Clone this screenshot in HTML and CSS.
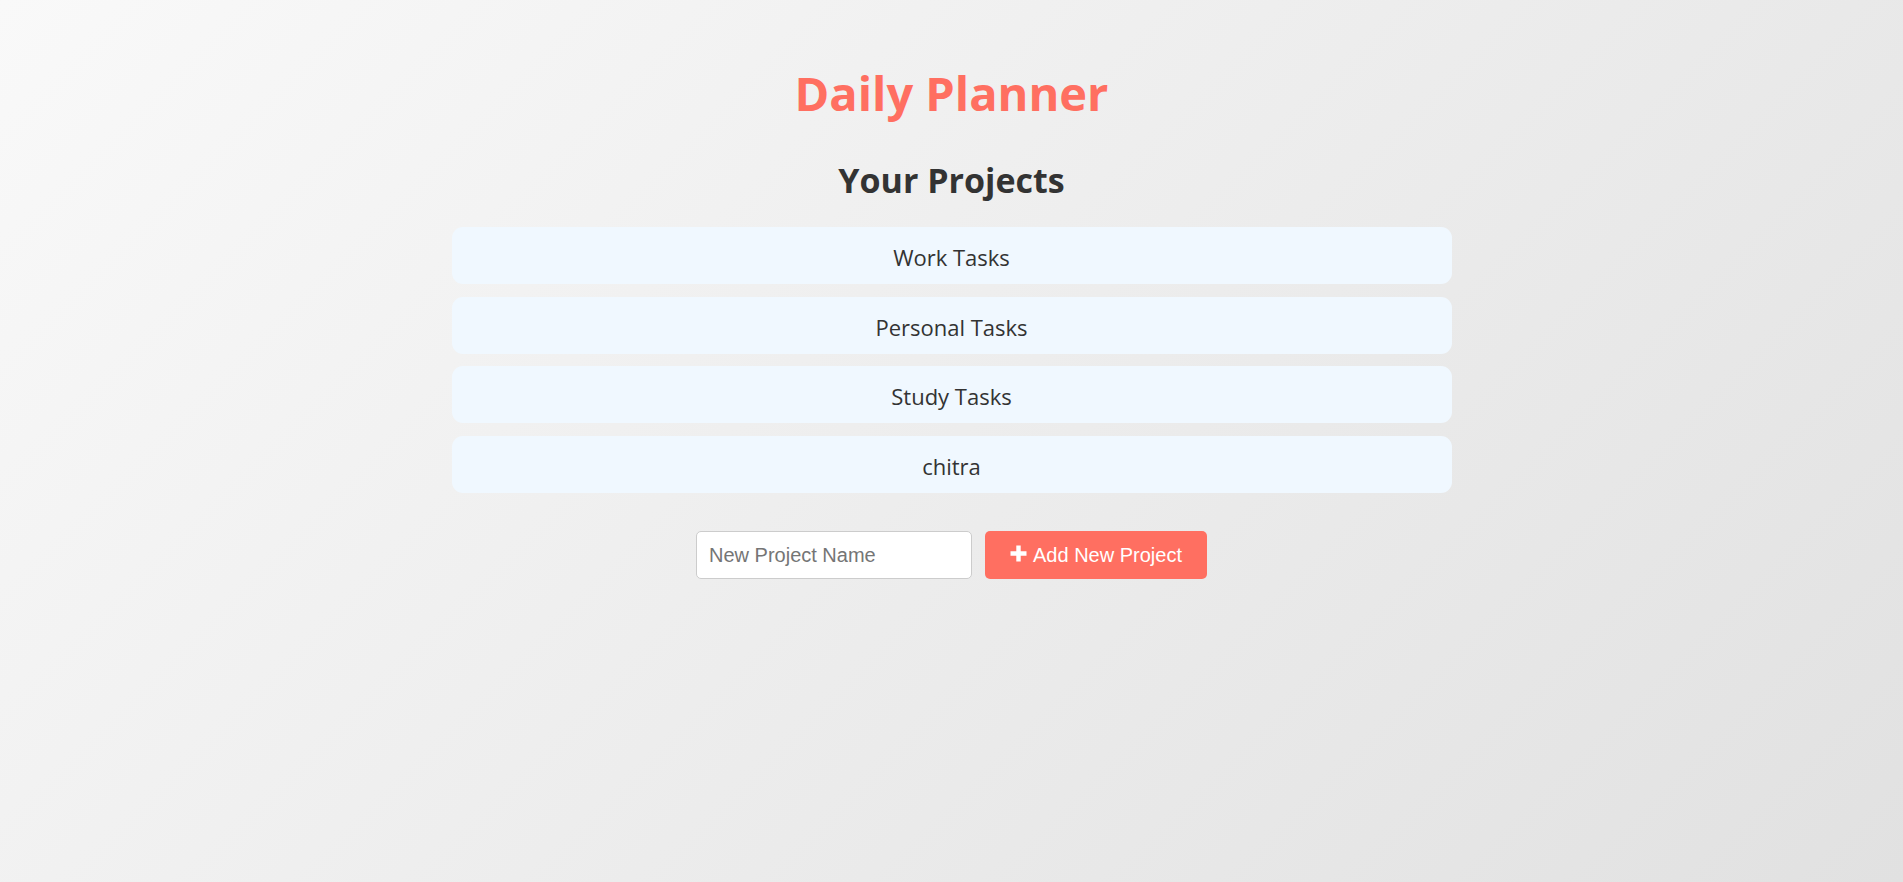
FILE: index.html
```html
<!DOCTYPE html>
<html lang="en">
<head>
<meta charset="utf-8">
<title>Daily Planner</title>
<link rel="stylesheet" href="styles.css">
</head>
<body>
<main class="planner">
  <h1 class="title">Daily Planner</h1>
  <h2 class="subtitle">Your Projects</h2>
  <ul class="projects">
    <li class="project">Work Tasks</li>
    <li class="project">Personal Tasks</li>
    <li class="project">Study Tasks</li>
    <li class="project">chitra</li>
  </ul>
  <form class="add-form">
    <input class="add-input" type="text" placeholder="New Project Name">
    <button class="add-button" type="button">
      <svg class="plus" viewBox="0 0 17 17" width="17" height="17" aria-hidden="true"><path d="M6.3 0.5h4.4v5.8h5.8v4.4h-5.8v5.8H6.3v-5.8H0.5V6.3h5.8z" fill="#fff"/></svg>
      <span>Add New Project</span>
    </button>
  </form>
</main>
</body>
</html>
```
FILE: styles.css
```css
html, body {
  margin: 0;
  padding: 0;
}
body {
  min-height: 100vh;
  background: linear-gradient(135deg, #f9f9f9 0%, #e1e1e1 100%);
  font-family: "Open Sans", "Noto Sans", sans-serif;
  color: #333;
}
.planner {
  width: 1000px;
  margin: 0 auto;
  padding-top: 63px;
  text-align: center;
}
.title {
  margin: 0;
  font-size: 47px;
  line-height: 60px;
  font-weight: 700;
  color: #ff6f61;
}
.subtitle {
  margin: 35px 0 0;
  font-size: 34px;
  line-height: 44px;
  font-weight: 700;
  color: #333;
}
.projects {
  list-style: none;
  margin: 25px 0 0;
  padding: 0;
  display: flex;
  flex-direction: column;
  gap: 12.7px;
}
.project {
  box-sizing: border-box;
  height: 57px;
  padding-top: 3px;
  display: flex;
  align-items: center;
  justify-content: center;
  background: #f0f8ff;
  border-radius: 11px;
  font-size: 22px;
  color: #333;
}
.add-form {
  margin-top: 38px;
  display: flex;
  justify-content: center;
  gap: 13px;
}
.add-input {
  box-sizing: border-box;
  width: 276px;
  height: 48px;
  padding: 0 12px;
  border: 1px solid #ccc;
  border-radius: 5px;
  background: #fff;
  font-family: "Liberation Sans", Arial, sans-serif;
  font-size: 20px;
  color: #333;
}
.add-input::placeholder {
  color: #757575;
}
.add-button {
  box-sizing: border-box;
  width: 222px;
  height: 48px;
  display: flex;
  align-items: center;
  justify-content: center;
  gap: 6px;
  padding: 0;
  border: none;
  border-radius: 5px;
  background: #ff6f61;
  color: #fff;
  font-family: "Liberation Sans", Arial, sans-serif;
  font-size: 20px;
  cursor: pointer;
}
.plus {
  width: 17px;
  height: 17px;
  margin-top: -3px;
}
```
